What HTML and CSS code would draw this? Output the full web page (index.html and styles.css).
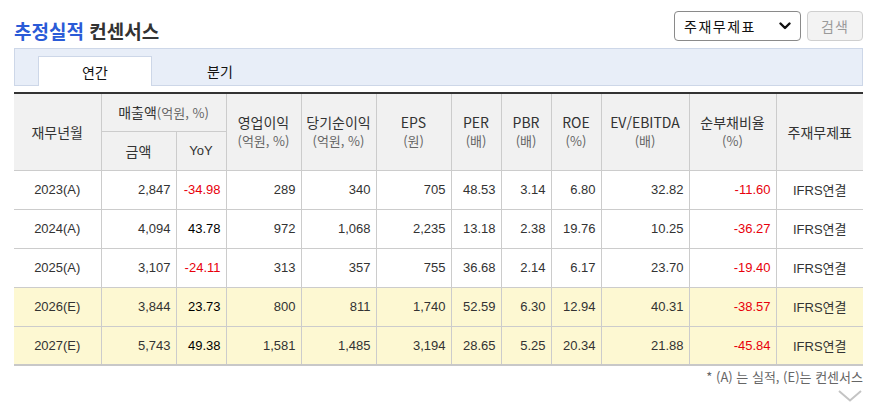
FILE: index.html
```html
<!DOCTYPE html>
<html lang="ko">
<head>
<meta charset="utf-8">
<title>추정실적 컨센서스</title>
<link rel="stylesheet" href="styles.css">
</head>
<body>
<div class="wrap">
  <div class="topbar">
    <h2 class="title"><span class="blue">추정실적</span> 컨센서스</h2>
    <div class="controls">
      <div class="select">
        <span>주재무제표</span>
        <svg class="sel-arrow" width="12" height="8" viewBox="0 0 12 8"><polyline points="1.5,1.5 6,6 10.5,1.5" fill="none" stroke="#111" stroke-width="2.4" stroke-linecap="round" stroke-linejoin="round"/></svg>
      </div>
      <div class="btn">검색</div>
    </div>
  </div>

  <div class="tabs">
    <div class="tab active">연간</div>
    <div class="tab">분기</div>
  </div>

  <table class="grid">
    <colgroup>
      <col class="c87"><col class="c75"><col class="c50"><col class="c75"><col class="c75"><col class="c75">
      <col class="c50"><col class="c50"><col class="c50"><col class="c88"><col class="c87"><col class="c87">
    </colgroup>
    <thead>
      <tr>
        <th rowspan="2">재무년월</th>
        <th colspan="2">매출액<span class="unit">(억원, %)</span></th>
        <th rowspan="2">영업이익<br><span class="unit">(억원, %)</span></th>
        <th rowspan="2">당기순이익<br><span class="unit">(억원, %)</span></th>
        <th rowspan="2">EPS<br><span class="unit">(원)</span></th>
        <th rowspan="2">PER<br><span class="unit">(배)</span></th>
        <th rowspan="2">PBR<br><span class="unit">(배)</span></th>
        <th rowspan="2">ROE<br><span class="unit">(%)</span></th>
        <th rowspan="2">EV/EBITDA<br><span class="unit">(배)</span></th>
        <th rowspan="2">순부채비율<br><span class="unit">(%)</span></th>
        <th rowspan="2">주재무제표</th>
      </tr>
      <tr>
        <th>금액</th>
        <th class="en">YoY</th>
      </tr>
    </thead>
    <tbody>
      <tr>
        <td class="yr">2023(A)</td><td>2,847</td><td class="neg">-34.98</td><td>289</td><td>340</td><td>705</td>
        <td>48.53</td><td>3.14</td><td>6.80</td><td>32.82</td><td class="neg">-11.60</td><td class="std">IFRS연결</td>
      </tr>
      <tr>
        <td class="yr">2024(A)</td><td>4,094</td><td class="pos">43.78</td><td>972</td><td>1,068</td><td>2,235</td>
        <td>13.18</td><td>2.38</td><td>19.76</td><td>10.25</td><td class="neg">-36.27</td><td class="std">IFRS연결</td>
      </tr>
      <tr>
        <td class="yr">2025(A)</td><td>3,107</td><td class="neg">-24.11</td><td>313</td><td>357</td><td>755</td>
        <td>36.68</td><td>2.14</td><td>6.17</td><td>23.70</td><td class="neg">-19.40</td><td class="std">IFRS연결</td>
      </tr>
      <tr class="est">
        <td class="yr">2026(E)</td><td>3,844</td><td class="pos">23.73</td><td>800</td><td>811</td><td>1,740</td>
        <td>52.59</td><td>6.30</td><td>12.94</td><td>40.31</td><td class="neg">-38.57</td><td class="std">IFRS연결</td>
      </tr>
      <tr class="est">
        <td class="yr">2027(E)</td><td>5,743</td><td class="pos">49.38</td><td>1,581</td><td>1,485</td><td>3,194</td>
        <td>28.65</td><td>5.25</td><td>20.34</td><td>21.88</td><td class="neg">-45.84</td><td class="std">IFRS연결</td>
      </tr>
    </tbody>
  </table>

  <p class="note">* (A) 는 실적, (E)는 컨센서스</p>
  <div class="more">
    <svg width="24" height="12" viewBox="0 0 24 12"><polyline points="1,1 12,10.5 23,1" fill="none" stroke="#c4c4c4" stroke-width="2"/></svg>
  </div>
</div>
</body>
</html>
```

FILE: styles.css
```css
* { box-sizing: border-box; }
html, body { margin: 0; padding: 0; background: #fff; }
body {
  font-family: "Noto Sans CJK KR", "Liberation Sans", sans-serif;
  color: #333;
}
.wrap {
  width: 876px;
  padding: 0 13px 0 14px;
}
.topbar {
  height: 41px;
  display: flex;
  align-items: flex-end;
  justify-content: space-between;
}
.title {
  margin: 0;
  font-size: 19px;
  line-height: 22px;
  font-weight: 700;
  color: #333;
  margin-bottom: -1px;
}
.title .blue { color: #2a5bd7; }
.controls {
  display: flex;
  gap: 6px;
  height: 30px;
}
.select {
  width: 127px;
  height: 30px;
  border: 1px solid #8a8a8a;
  border-radius: 4px;
  background: #fff;
  display: flex;
  align-items: center;
  justify-content: space-between;
  padding: 0 9px 0 9px;
  font-size: 14px;
  letter-spacing: 1.5px;
  color: #111;
}
.sel-arrow { display: block; }
.btn {
  width: 56px;
  height: 30px;
  border: 1px solid #cfcfcf;
  border-radius: 4px;
  background: #f3f3f3;
  color: #9a9a9a;
  font-size: 14px;
  letter-spacing: 1px;
  display: flex;
  align-items: center;
  justify-content: center;
}
.tabs {
  margin-top: 7px;
  height: 38px;
  border: 1px solid #cdd7e8;
  background: #e8eef8;
  display: flex;
  align-items: flex-end;
  padding-left: 23px;
}
.tab {
  width: 114px;
  height: 30px;
  margin-bottom: -1px;
  display: flex;
  align-items: center;
  justify-content: center;
  font-size: 14px;
  color: #111;
}
.tab + .tab { margin-left: 11px; }
.tab.active {
  background: #fff;
  border: 1px solid #cdd7e8;
  border-bottom: none;
}
.grid {
  margin-top: 6px;
  width: 849px;
  border-collapse: collapse;
  table-layout: fixed;
  border-top: 2px solid #333;
  border-bottom: 2px solid #c8c8c8;
}
.c87 { width: 87px; }
.c88 { width: 88px; }
.c75 { width: 75px; }
.c50 { width: 50px; }
.grid th {
  background: #f1f1f1;
  font-weight: 400;
  font-size: 14px;
  line-height: 18px;
  color: #333;
  height: 38.5px;
  padding: 0;
  text-align: center;
  border: 1px solid #cccccc;
  white-space: nowrap;
}
.grid th.en { font-family: "Liberation Sans", sans-serif; font-size: 13px; }
.grid .unit { color: #666; font-size: 13px; }
.grid td {
  height: 39px;
  padding: 0 5px 0 0;
  text-align: right;
  font-family: "Liberation Sans", "Noto Sans CJK KR", sans-serif;
  font-size: 13px;
  color: #333;
  border: 1px solid #cccccc;
  white-space: nowrap;
}
.grid tr > :first-child { border-left: none; }
.grid tr > :last-child { border-right: none; }
.grid thead tr:nth-child(2) > :first-child { border-left: 1px solid #ccc; }
.grid td.yr { text-align: center; padding: 0; }
.grid td.std { text-align: center; padding: 0; font-size: 13px; }
.grid td.neg { color: #e8000b; }
.grid td.pos { color: #000; }
.grid tr.est td { background: #fdf8d2; }
.note {
  margin: 3px 0 0;
  text-align: right;
  font-size: 13px;
  line-height: 16px;
  color: #666;
}
.more {
  display: flex;
  justify-content: flex-end;
  padding-right: 1px;
  margin-top: 5px;
}
.more svg { display: block; }
```
